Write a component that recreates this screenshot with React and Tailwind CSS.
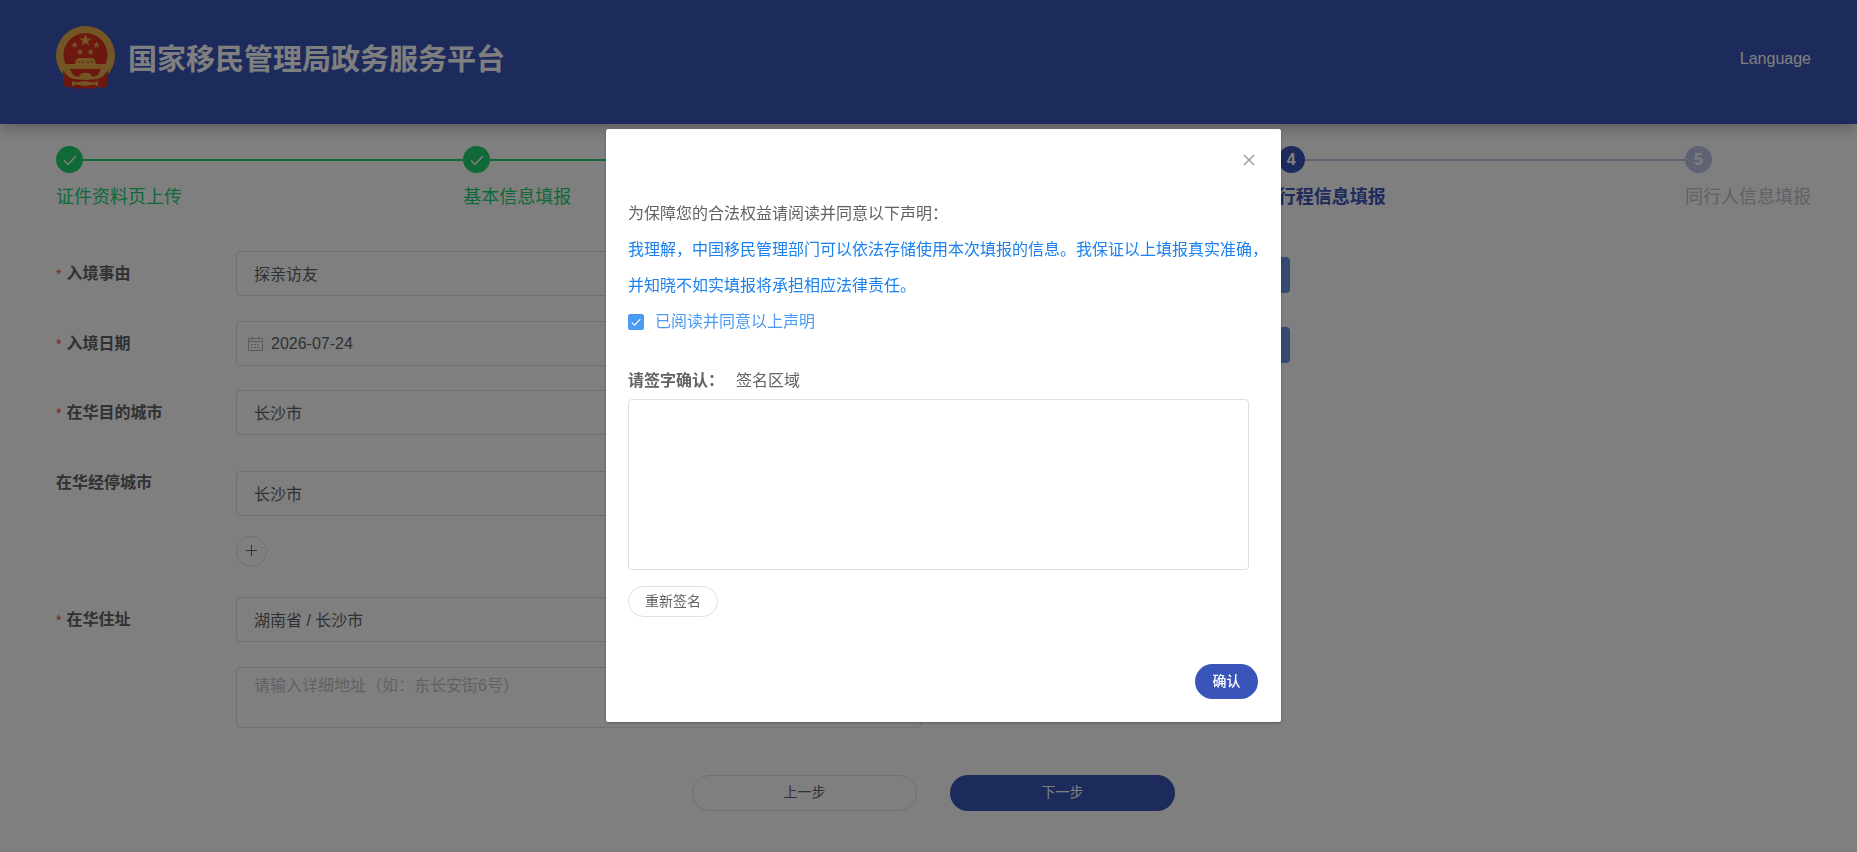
import React, { useState } from 'react';
import clsx from 'clsx';

const steps = [
  { label: '证件资料页上传', state: 'done' },
  { label: '基本信息填报', state: 'done' },
  { label: '证件信息填报', state: 'done' },
  { label: '行程信息填报', state: 'active' },
  { label: '同行人信息填报', state: 'wait' },
];

const circleStyles = {
  done: 'bg-[#20d26f] text-white',
  active: 'bg-[#3a55b9] text-white',
  wait: 'bg-[#bcc4e6] text-white',
};

const labelStyles = {
  done: 'text-[#20d26f]',
  active: 'text-[#3a55b9] font-bold',
  wait: 'text-[#c0c4cc]',
};

function Emblem() {
  return (
    <svg viewBox="0 0 59 64" className="h-16 w-[59px]" aria-hidden="true">
      <path d="M7 43H52V57L50 61L45 62L41 61L37 63L30 62L22 63L18 61L13 62L9 60L7 57Z" fill="#d8301f" />
      <circle cx="29.5" cy="29.5" r="29.5" fill="#e6ac48" />
      <path d="M7 45H52V57L50 61H9L7 57Z" fill="#d8301f" />
      <circle cx="29.5" cy="29" r="22" fill="#d8301f" />
      <path d="M29.5 8l1.600 4.400h4.700l-3.800 2.900 1.400 4.500-3.900-2.700-3.900 2.700 1.400-4.500-3.800-2.900h4.700z" fill="#e6ac48" />
      <g fill="#e6ac48">
        <path id="star" d="M18.500 15.500l.9 2.300 2.500.1-2 1.600.7 2.400-2.100-1.400-2.100 1.400.7-2.400-2-1.600 2.500-.1z" />
        <use href="#star" x="22" />
        <use href="#star" x="5.5" y="7" />
        <use href="#star" x="16" y="7" />
      </g>
      <path d="M19 38L20 34L22 32H37L39 34L40 38H55L52 43Q49 51 41 53L30 54L18 53Q10 51 7 43L4 38Z" fill="#e6ac48" />
      <path d="M14 43H45L42 49L37 51L33 47H26L22 51L17 49Z" fill="#d8301f" />
      <path d="M16 55l4 1.500 9-1.500 9 1.500 4-1.500v5l-4-1.500-9 1.500-9-1.500-4 1.500z" fill="#e6ac48" />
      <path d="M22 36h2M26 36h2M31 36h2M35 36h2" stroke="#d8301f" />
      <path d="M51 37l4-4M49 42l5-3M46 46l4-2" stroke="#d6cdb4" strokeDasharray="1 1" />
    </svg>
  );
}

function CheckIcon({ className }) {
  return (
    <svg viewBox="0 0 14 14" className={className} fill="none" stroke="currentColor" strokeWidth="1.5" aria-hidden="true">
      <path d="M1 7.500L5 11.500L13 3" />
    </svg>
  );
}

function CalendarIcon() {
  return (
    <svg viewBox="0 0 16 16" className="size-4 shrink-0 text-[#b4b8c0]" fill="none" stroke="currentColor" aria-hidden="true">
      <path d="M.5 2.500h14v12H.5zM.5 5.500h14M4.500 1v3M10.500 1v3" />
      <path d="M3 8.500h9M3 11.500h9" strokeDasharray="2 1" />
    </svg>
  );
}

function Steps() {
  return (
    <ol className="flex">
      {steps.map((step, i) => {
        const last = i === steps.length - 1;
        return (
          <li key={step.label} className={last ? 'shrink-0' : 'flex-1'}>
            <div className="flex items-center">
              <span className={clsx('flex size-[27px] shrink-0 items-center justify-center rounded-full text-base font-bold', circleStyles[step.state])}>
                {step.state === 'done' ? <CheckIcon className="size-[14px]" /> : i + 1}
              </span>
              {!last && <span className={clsx('h-[2px] flex-1', step.state === 'done' ? 'bg-[#20d26f]' : 'bg-[#bcc4e6]')} />}
            </div>
            <div className={clsx('mt-2 text-lg leading-8', labelStyles[step.state])}>{step.label}</div>
          </li>
        );
      })}
    </ol>
  );
}

function FormRow({ label, htmlFor, required, className, children }) {
  return (
    <div className={clsx('flex', className)}>
      <label htmlFor={htmlFor} className="h-[45px] w-[180px] shrink-0 font-bold leading-[45px]">
        {required && <span className="mr-[5px] text-sm font-normal text-[#f5432c]">*</span>}
        {label}
      </label>
      {children}
    </div>
  );
}

const inputClass = 'h-[45px] w-[685px] rounded border border-[#dcdfe6] bg-white px-[17px] pb-[2px] text-base text-[#606266]';
const voiceClass = 'mt-[6px] ml-auto h-9 w-28 rounded bg-[#6696e8]';

function TripForm() {
  return (
    <form>
      <div className="flex max-w-[1234px]">
        <FormRow label="入境事由" htmlFor="reason" required>
          <input id="reason" className={inputClass} defaultValue="探亲访友" />
        </FormRow>
        <button type="button" aria-label="入境事由说明" className={voiceClass} />
      </div>

      <div className="mt-[25px] flex max-w-[1234px]">
        <FormRow label="入境日期" htmlFor="date" required>
          <div className="flex h-[45px] w-[685px] items-center gap-[7px] rounded border border-[#dcdfe6] pl-[11px]">
            <CalendarIcon />
            <input id="date" className="w-full text-base text-[#606266]" defaultValue="2026-07-24" />
          </div>
        </FormRow>
        <button type="button" aria-label="入境日期说明" className={voiceClass} />
      </div>

      <FormRow label="在华目的城市" htmlFor="city" required className="mt-6">
        <input id="city" className={inputClass} defaultValue="长沙市" />
      </FormRow>

      <FormRow label="在华经停城市" htmlFor="stopover" className="mt-[25px]">
        <div className="mt-[11px]">
          <input id="stopover" className={inputClass} defaultValue="长沙市" />
          <button type="button" aria-label="添加" className="mt-5 flex size-[31px] items-center justify-center rounded-full border border-[#dcdfe6] pb-[2px]">
            <svg viewBox="0 0 11 11" className="size-[11px]" stroke="currentColor" aria-hidden="true">
              <path d="M5.500 0v11M0 5.500h11" />
            </svg>
          </button>
        </div>
      </FormRow>

      <FormRow label="在华住址" htmlFor="region" required className="mt-[30px]">
        <div className="flex flex-col gap-[25px]">
          <input id="region" className={inputClass} defaultValue="湖南省 / 长沙市" />
          <textarea
            aria-label="详细地址"
            placeholder="请输入详细地址（如：东长安街6号）"
            className="h-[61px] w-[685px] resize-none rounded border border-[#dcdfe6] px-[17px] py-[6px] text-base placeholder:text-[#c0c4cc]"
          />
        </div>
      </FormRow>

      <div className="mt-[47px] flex justify-center gap-[33px] text-sm">
        <button type="button" className="h-9 w-[225px] rounded-full border border-[#dcdfe6] pb-[2px] text-[#606266]">上一步</button>
        <button type="button" className="h-9 w-[225px] rounded-full bg-[#3a55b9] pb-[2px] text-white">下一步</button>
      </div>
    </form>
  );
}

function DeclarationDialog({ onClose }) {
  const [agreed, setAgreed] = useState(true);

  return (
    <div className="fixed inset-0 flex items-start justify-center bg-black/50 pt-[129px] pl-[30px]">
      <div role="dialog" aria-modal="true" aria-label="声明确认" className="w-[675px] rounded-xs bg-white px-[22px] pb-[23px] shadow-[0_1px_3px_rgba(0,0,0,0.3)]">
        <div className="flex h-[67px] justify-end pt-[23px] pr-[2px]">
          <button type="button" aria-label="关闭" onClick={onClose} className="flex size-4 items-center justify-center text-[#909399]">
            <svg viewBox="0 0 12 12" className="size-3" stroke="currentColor" strokeWidth="1.2" aria-hidden="true">
              <path d="M1 1l10 10M11 1L1 11" />
            </svg>
          </button>
        </div>

        <div className="-mr-3 leading-9">
          <p>为保障您的合法权益请阅读并同意以下声明：</p>
          <p className="text-[#1a81ef]">
            我理解，中国移民管理部门可以依法存储使用本次填报的信息。我保证以上填报真实准确，并知晓不如实填报将承担相应法律责任。
          </p>
          <label className="flex items-center gap-[11px] text-[#4a9bf3]">
            <span className="grid size-4">
              <input
                type="checkbox"
                checked={agreed}
                onChange={(e) => setAgreed(e.target.checked)}
                className="col-start-1 row-start-1 size-4 appearance-none rounded-xs border border-[#4a9bf3] checked:bg-[#4a9bf3]"
              />
              {agreed && <CheckIcon className="pointer-events-none col-start-1 row-start-1 size-[10px] place-self-center text-white" />}
            </span>
            已阅读并同意以上声明
          </label>
        </div>

        <div className="mt-6 mr-[10px]">
          <div className="flex gap-3 leading-[34px]">
            <span className="font-bold">请签字确认：</span>
            <span>签名区域</span>
          </div>
          <canvas aria-label="签名区域" className="mt-px block h-[171px] w-full rounded border border-[#dcdfe6]" />
          <button type="button" className="mt-4 h-[31px] w-[90px] rounded-full border border-[#dcdfe6] pb-[2px] text-sm">重新签名</button>
        </div>

        <div className="mt-[47px] mr-px flex justify-end">
          <button type="button" onClick={onClose} className="h-[35px] w-[63px] rounded-full bg-[#3a55b9] pb-[2px] text-sm font-medium text-white">确认</button>
        </div>
      </div>
    </div>
  );
}

export default function App() {
  const [open, setOpen] = useState(true);

  return (
    <div className="min-h-screen bg-white font-['Liberation_Sans','Noto_Sans_CJK_SC',sans-serif] text-base text-[#606266]">
      <header className="flex h-[124px] items-center justify-between bg-[#3a55b9] pr-[46px] pb-2 pl-14 text-white shadow-[0_2px_16px_rgba(0,0,0,0.35)]">
        <div className="flex items-center gap-[13px]">
          <Emblem />
          <h1 className="pt-[6px] text-[29px] font-bold">国家移民管理局政务服务平台</h1>
        </div>
        <button type="button" className="pt-[2px]">Language</button>
      </header>
      <main className="pt-[22px] pr-[46px] pl-14">
        <Steps />
        <div className="mt-[38px]">
          <TripForm />
        </div>
      </main>
      {open && <DeclarationDialog onClose={() => setOpen(false)} />}
    </div>
  );
}
